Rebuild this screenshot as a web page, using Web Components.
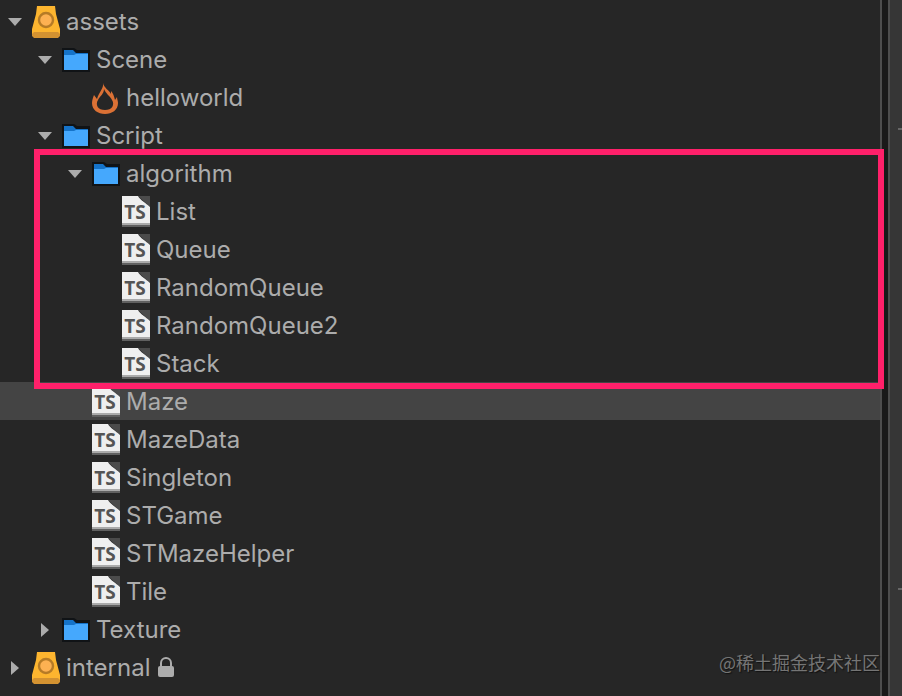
<!DOCTYPE html>
<html lang="en">
<head>
<meta charset="utf-8">
<title>Assets</title>
<style>
  body {
    margin: 0;
    background: #262626;
    color: #acacac;
    font-family: Inter, "Liberation Sans", sans-serif;
    font-size: 24px;
  }
</style>
</head>
<body>

<asset-panel>
  <tree-item icon="database" label="assets" open>
    <tree-item icon="folder" label="Scene" open>
      <tree-item icon="fire" label="helloworld"></tree-item>
    </tree-item>
    <tree-item icon="folder" label="Script" open>
      <tree-item icon="folder" label="algorithm" open marked>
        <tree-item icon="ts" label="List"></tree-item>
        <tree-item icon="ts" label="Queue"></tree-item>
        <tree-item icon="ts" label="RandomQueue"></tree-item>
        <tree-item icon="ts" label="RandomQueue2"></tree-item>
        <tree-item icon="ts" label="Stack"></tree-item>
      </tree-item>
      <tree-item icon="ts" label="Maze" selected></tree-item>
      <tree-item icon="ts" label="MazeData"></tree-item>
      <tree-item icon="ts" label="Singleton"></tree-item>
      <tree-item icon="ts" label="STGame"></tree-item>
      <tree-item icon="ts" label="STMazeHelper"></tree-item>
      <tree-item icon="ts" label="Tile"></tree-item>
    </tree-item>
    <tree-item icon="folder" label="Texture" closed></tree-item>
  </tree-item>
  <tree-item icon="database" label="internal" closed locked></tree-item>
  <water-mark slot="overlay">@稀土掘金技术社区</water-mark>
</asset-panel>

<script>
const icons = {
  database: `
    <path d="M5 0H23L24 8L28 23V28H0V23L4 8Z" fill="#fdb52f"/>
    <path d="M2 26H26L28 28V30L26 32H2L0 30V28Z" fill="#d39231"/>
    <circle cx="14" cy="14" r="7" fill="#fdb152" stroke="#b67b26" stroke-width="2.4"/>`,
  folder: `
    <path d="M0 4H12L15 6H28V28H0Z" fill="#101316"/>
    <path d="M2 6H11L14 9H26V12H2Z" fill="#1573c9"/>
    <path d="M2 11H12L14 10H26V26H2Z" fill="#45a8fd"/>`,
  fire: `
    <path d="M11 1C12 6 7 10 5 17L2 13C1 16 0 18 0 21C0 28 6 32 13 32C20 32 26 28 26 21C26 19 25 17 25 15L23 18C22 14 21 11 19 9V12C17 8 12 6 11 1ZM12 7C14 12 18 14 20 18C23 23 20 28 13 28C6 28 3 23 6 18C8 14 12 12 12 7Z" fill="#db7135" fill-rule="evenodd"/>`,
  ts: `
    <path d="M16 0H28V11Z" fill="#4b4b4b"/>
    <path d="M0 0H16C18 4 24 7 28 11V31H0Z" fill="#efefef"/>
    <path d="M0 27H28V29H0Z" fill="#aaa"/>
    <path d="M0 29H28V31H0Z" fill="#606060"/>
    <text x="13" y="23" text-anchor="middle" font-family="Open Sans, sans-serif" font-size="19" font-weight="700" fill="#555">TS</text>`
};

const itemTemplate = document.createElement('template');
itemTemplate.innerHTML = `
  <style>
    :host {
      display: block;
      position: relative;
    }
    .row {
      display: flex;
      align-items: center;
      height: 38px;
      padding-left: calc(var(--depth) * 30px);
      white-space: nowrap;
    }
    :host([selected]) .row {
      background: #444;
    }
    button {
      display: flex;
      align-items: center;
      justify-content: center;
      width: 30px;
      height: 38px;
      margin: 0 2px 0 0;
      padding: 2px 0 0;
      border: 0;
      background: none;
      color: inherit;
    }
    .leaf {
      visibility: hidden;
    }
    button svg {
      width: 14px;
      height: 14px;
      fill: currentColor;
    }
    :host([closed]) button svg {
      transform: rotate(-90deg);
    }
    :host([closed]) .children {
      display: none;
    }
    .icon {
      width: 28px;
      height: 32px;
      margin-right: 6px;
      padding-top: 2px;
    }
    .lock {
      display: none;
      width: 16px;
      height: 20px;
      margin-left: 8px;
    }
    :host([locked]) .lock {
      display: block;
    }
    /* highlight frame, drawn over the neighbouring rows */
    :host([marked])::after {
      content: "";
      position: absolute;
      z-index: 1;
      top: -5px;
      right: -4px;
      bottom: -7px;
      left: 34px;
      border: 6px solid #ff206a;
      pointer-events: none;
    }
  </style>
  <div class="row">
    <button type="button"><svg viewBox="0 0 14 14"><path d="M0 3H14L7 11Z"/></svg></button>
    <svg class="icon" viewBox="0 0 28 32"></svg>
    <span class="label"></span>
    <svg class="lock" viewBox="0 0 16 20">
      <path d="M3 10V6A5 5 0 0 1 13 6V10" fill="none" stroke="#acacac" stroke-width="2"/>
      <rect y="9" width="16" height="11" rx="2" fill="#acacac"/>
    </svg>
  </div>
  <div class="children"><slot></slot></div>
`;

/** One row of the asset tree, child rows go in the slot */
class TreeItem extends HTMLElement {
  constructor() {
    super();
    this._shadowRoot = this.attachShadow({mode: 'open'});
    this._shadowRoot.appendChild(itemTemplate.content.cloneNode(true));
    this.toggle = this._shadowRoot.querySelector('button');
    this.icon = this._shadowRoot.querySelector('.icon');
    this.label = this._shadowRoot.querySelector('.label');
  }

  connectedCallback() {
    const parent = this.parentElement.closest('tree-item');
    this.depth = parent ? parent.depth + 1 : 0;
    this.style.setProperty('--depth', this.depth);
    this.icon.innerHTML = icons[this.getAttribute('icon')];
    this.label.textContent = this.getAttribute('label');
    this.toggle.setAttribute('aria-label', this.getAttribute('label'));
    if (!this.hasAttribute('open') && !this.hasAttribute('closed')) {
      this.toggle.className = 'leaf';
    }
    this.toggle.addEventListener('click', this.onToggle);
  }

  disconnectedCallback() {
    this.toggle.removeEventListener('click', this.onToggle);
  }

  onToggle = () => {
    this.toggleAttribute('closed');
  };
}

const panelTemplate = document.createElement('template');
panelTemplate.innerHTML = `
  <style>
    :host {
      display: flex;
      position: relative;
      min-height: 100vh;
    }
    .tree {
      flex: 1;
      padding-top: 2px;
    }
    .splitter {
      width: 6px;
      background: #191919;
      border: solid #4d4d4d;
      border-width: 0 2px;
    }
    .next {
      display: flex;
      flex-direction: column;
      align-items: flex-end;
      gap: 458px;
      box-sizing: border-box;
      width: 12px;
      padding-top: 128px;
      background: #363636;
    }
    .tick {
      width: 4px;
      height: 2px;
      background: #666;
    }
  </style>
  <div class="tree"><slot></slot></div>
  <div class="splitter"></div>
  <div class="next"><div class="tick"></div><div class="tick"></div></div>
  <slot name="overlay"></slot>
`;

/** Panel with the tree, the splitter and the edge of the next panel */
class AssetPanel extends HTMLElement {
  constructor() {
    super();
    this.attachShadow({mode: 'open'}).appendChild(panelTemplate.content.cloneNode(true));
  }
}

const markTemplate = document.createElement('template');
markTemplate.innerHTML = `
  <style>
    :host {
      position: absolute;
      right: 22px;
      bottom: 22px;
      color: #757575;
      font-family: "Noto Sans CJK SC", sans-serif;
      font-size: 18px;
      line-height: 24px;
      text-shadow: 1px 1px 1px #111;
    }
  </style>
  <slot></slot>
`;

/** Text laid over the bottom corner of the panel */
class WaterMark extends HTMLElement {
  constructor() {
    super();
    this.attachShadow({mode: 'open'}).appendChild(markTemplate.content.cloneNode(true));
  }
}

window.customElements.define('asset-panel', AssetPanel);
window.customElements.define('tree-item', TreeItem);
window.customElements.define('water-mark', WaterMark);
</script>
</body>
</html>
